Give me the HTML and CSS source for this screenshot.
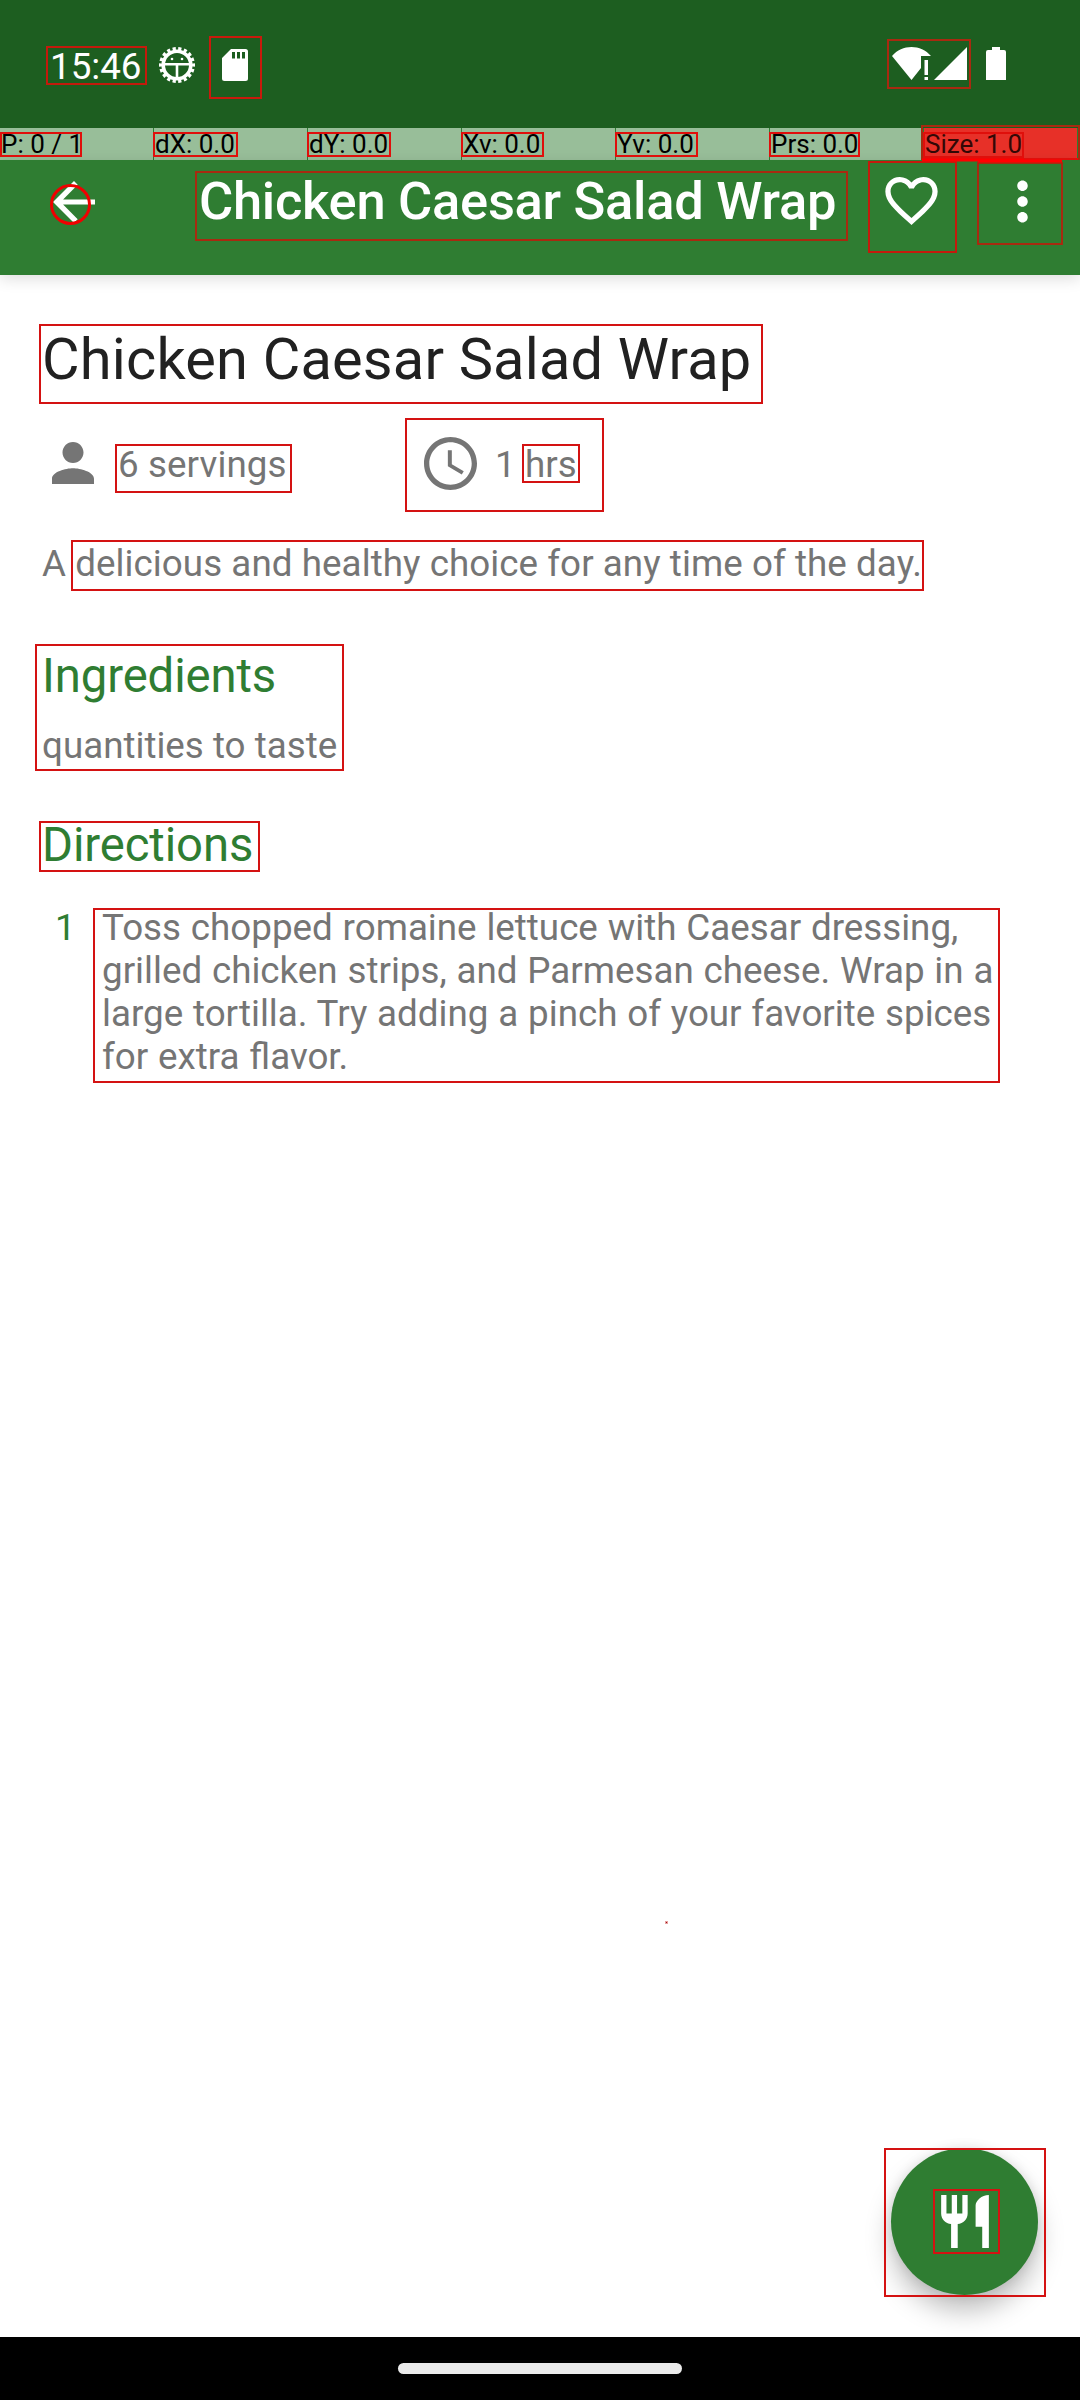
FILE: index.html
```html
<!DOCTYPE html>
<html lang="en">
<head>
<meta charset="utf-8">
<title>Chicken Caesar Salad Wrap</title>
<link rel="stylesheet" href="styles.css">
</head>
<body>
<div class="screen">
  <header class="status">
    <span class="clock">15:46</span>
    <svg class="gear" viewBox="0 0 38 38">
      <circle cx="19" cy="19" r="16" fill="none" stroke="#fff" stroke-width="4" pathLength="108" stroke-dasharray="3.400 2.600" stroke-dashoffset="1.700"/>
      <circle cx="19" cy="19" r="13.800" fill="none" stroke="#fff" stroke-width="3.600"/>
      <path d="M6 18.200h26M19 19v13" stroke="#fff" stroke-width="2.600" fill="none"/>
      <circle cx="14" cy="13" r="1.300" fill="#fff"/><circle cx="24" cy="13" r="1.300" fill="#fff"/>
    </svg>
    <svg class="sd" viewBox="0 0 26 32"><path fill="#fff" fill-rule="evenodd" d="M9 0h14.500a2.500 2.500 0 0 1 2.500 2.500v27a2.500 2.500 0 0 1-2.500 2.500h-21a2.500 2.500 0 0 1-2.500-2.500V9zM10 3v6.500h3V3zM15 3v6.500h3V3zM20 3v6.500h3V3z"/></svg>
    <span class="spacer"></span>
    <svg class="signals" viewBox="0 0 76 34">
      <path fill="#fff" d="M0 9C10-3 29-3 39 9H29v12l-9.500 12z"/>
      <path fill="#fff" d="M32.500 13h3.500v15h-3.500zM32.500 30h3.500v3h-3.500zM75 0v33H42z"/>
    </svg>
    <svg class="battery" viewBox="0 0 20 33"><path fill="#fff" d="M6 0h8v3h4a2 2 0 0 1 2 2v28H0V5a2 2 0 0 1 2-2h4z"/></svg>
  </header>

  <div class="pointer">
    <span>P: 0 / 1</span><span>dX: 0.0</span><span>dY: 0.0</span><span>Xv: 0.0</span><span>Yv: 0.0</span><span>Prs: 0.0</span><span class="size">Size: 1.0</span>
  </div>

  <div class="toolbar">
    <svg class="back" viewBox="0 0 42 42"><path fill="#fff" d="M42 18.400H10.100L24.700 3.700 21 0 0 21l21 21 3.700-3.700L10.100 23.600H42z"/></svg>
    <h1>Chicken Caesar Salad Wrap</h1>
    <svg class="heart" viewBox="2 3 20 18.350"><path fill="#fff" d="M16.500 3c-1.740 0-3.410.810-4.500 2.090C10.910 3.810 9.240 3 7.500 3 4.420 3 2 5.420 2 8.500c0 3.780 3.400 6.860 8.550 11.540L12 21.350l1.450-1.320C18.600 15.360 22 12.280 22 8.500 22 5.420 19.580 3 16.500 3zm-4.400 15.550l-.1.100-.1-.1C7.140 14.240 4 11.390 4 8.500 4 6.500 5.500 5 7.500 5c1.540 0 3.040.990 3.570 2.360h1.870C13.460 5.990 14.960 5 16.500 5c2 0 3.500 1.500 3.500 3.500 0 2.890-3.140 5.740-7.900 10.050z"/></svg>
    <svg class="more" viewBox="8 0 8 24"><path fill="#fff" d="M12 8c1.100 0 2-.9 2-2s-.9-2-2-2-2 .9-2 2 .9 2 2 2zm0 2c-1.100 0-2 .9-2 2s.9 2 2 2 2-.9 2-2-.9-2-2-2zm0 6c-1.100 0-2 .9-2 2s.9 2 2 2 2-.9 2-2-.9-2-2-2z"/></svg>
  </div>

  <main class="content">
    <h2 class="name">Chicken Caesar Salad Wrap</h2>
    <div class="facts">
      <div class="fact">
        <svg class="person" viewBox="4 4 16 16"><path fill="#757575" d="M12 12c2.210 0 4-1.790 4-4s-1.790-4-4-4-4 1.790-4 4 1.790 4 4 4zm0 2c-2.670 0-8 1.340-8 4v2h16v-2c0-2.660-5.330-4-8-4z"/></svg>
        <span>6 servings</span>
      </div>
      <div class="fact">
        <svg class="time" viewBox="2 2 20 20"><path fill="#757575" d="M11.990 2C6.470 2 2 6.480 2 12s4.470 10 9.990 10C17.520 22 22 17.520 22 12S17.520 2 11.990 2zM12 20c-4.420 0-8-3.580-8-8s3.580-8 8-8 8 3.580 8 8-3.580 8-8 8zM12.500 7H11v6l5.250 3.150.750-1.230-4.500-2.670z"/></svg>
        <span>1 hrs</span>
      </div>
    </div>
    <p class="summary">A delicious and healthy choice for any time of the day.</p>
    <h3 class="ingredients">Ingredients</h3>
    <p class="quantities">quantities to taste</p>
    <h3 class="directions">Directions</h3>
    <div class="step">
      <span class="num">1</span>
      <p>Toss chopped romaine lettuce with Caesar dressing,<br>grilled chicken strips, and Parmesan cheese. Wrap in a<br>large tortilla. Try adding a pinch of your favorite spices<br>for extra flavor.</p>
    </div>
    <div class="fab">
      <svg viewBox="3 2 18 20"><path fill="#fff" d="M11 9H9V2H7v7H5V2H3v7c0 2.120 1.660 3.840 3.750 3.970V22h2.500v-9.030C11.340 12.840 13 11.120 13 9V2h-2v7zm5-3v8h2.500v8H21V2c-2.760 0-5 2.240-5 4z"/></svg>
    </div>
  </main>
  <footer class="nav"><span class="handle"></span></footer>

  <svg class="marks" viewBox="0 0 1080 2400">
    <g fill="none" stroke-width="2">
      <g stroke="#a82a10">
        <rect x="47" y="47" width="99" height="37" stroke="#c41a0c"/>
        <rect x="210" y="37" width="51" height="61" stroke="#c81a0c"/>
        <rect x="888" y="40" width="82" height="48"/>
        <rect x="196" y="172" width="651" height="68"/>
        <rect x="869" y="162" width="87" height="90" stroke="#c41a0c"/>
        <rect x="978" y="163" width="84" height="81"/>
      </g>
      <g stroke="#e00f0b">
        <rect x="1" y="133" width="80" height="23"/>
        <rect x="154" y="133" width="83" height="23"/>
        <rect x="308" y="133" width="82" height="23"/>
        <rect x="462" y="133" width="81" height="23"/>
        <rect x="616" y="133" width="81" height="23"/>
        <rect x="770" y="133" width="89" height="23"/>
        <rect x="924" y="133" width="99" height="24"/>
        <path d="M922 159h157"/>
        <path d="M922 160V126h157v34" stroke="#a82a10"/>
        <path d="M922 160h102M978 161h84" stroke="#f00" stroke-width="3"/>
      </g>
      <g stroke="#d41212">
        <rect x="40" y="325" width="722" height="78"/>
        <rect x="116" y="445" width="175" height="47"/>
        <rect x="406" y="419" width="197" height="92"/>
        <rect x="523" y="445" width="56" height="37"/>
        <rect x="72" y="541" width="851" height="49"/>
        <rect x="36" y="645" width="307" height="125"/>
        <rect x="40" y="822" width="219" height="49"/>
        <rect x="94" y="909" width="905" height="173"/>
        <rect x="885" y="2149" width="160" height="147"/>
        <rect x="934" y="2190" width="65" height="63"/>
      </g>
      <circle cx="70.500" cy="204.500" r="19" stroke="#f00000" stroke-width="3"/>
    </g>
    <rect x="665" y="1921" width="3" height="3" fill="#e8a0a0"/>
    <rect x="666" y="1922" width="1" height="1" fill="#901010"/>
  </svg>
</div>
</body>
</html>
```
FILE: styles.css
```css
* { box-sizing: border-box; margin: 0; padding: 0; }
body { font-family: Roboto, sans-serif; background: #fff; }
svg { display: block; flex: none; }
.screen { position: relative; width: 1080px; height: 2400px; display: flex; flex-direction: column; overflow: hidden; }

.status { height: 128px; background: #1d5e20; display: flex; align-items: flex-start; padding: 0 74px 0 50px; color: #fff; }
.clock { font-size: 36.750px; line-height: 44px; margin-top: 45px; width: 108px; }
.gear { width: 38px; height: 38px; margin-top: 46px; }
.sd { width: 26px; height: 32px; margin: 49px 0 0 26px; }
.spacer { flex: 1; }
.signals { width: 76px; height: 34px; margin: 47px 18px 0 0; }
.battery { width: 20px; height: 33px; margin-top: 47px; }

.pointer { height: 32px; display: grid; grid-template-columns: repeat(7, 153px); column-gap: 1px; background: #2f7d32; }
.pointer span { background: #98be99; color: #000; font-size: 26px; line-height: 32px; padding-left: 1px; white-space: nowrap; }
.pointer .size { background: #e73028; color: #330806; }

.toolbar { height: 115px; background: #2f7d32; display: flex; align-items: flex-start; color: #fff; position: relative; z-index: 1; box-shadow: 0 4px 14px rgba(0,0,0,.13); }
.back { width: 42px; height: 42px; margin: 21px 0 0 53px; }
.toolbar h1 { font-size: 52.500px; font-weight: 500; line-height: 62px; letter-spacing: -.3px; margin: 10px 0 0 104px; width: 686px; white-space: nowrap; }
.heart { width: 53px; height: 48px; margin-top: 17px; }
.more { width: 21px; height: 63px; margin: 10px 0 0 74px; }

.content { flex: 1; padding-left: 42px; color: #757575; font-size: 36.750px; letter-spacing: .1px; position: relative; overflow: hidden; }
.name { font-size: 57.750px; font-weight: 400; line-height: 68px; letter-spacing: .18px; color: #212121; margin-top: 50px; white-space: nowrap; }
.facts { display: grid; grid-template-columns: 373px auto; margin-top: 37px; height: 66px; }
.fact { display: flex; align-items: center; }
.person { width: 42px; height: 42px; margin-left: 10px; }
.fact span { margin-left: 24px; line-height: 44px; padding-top: 3px; }
.time { width: 53px; height: 53px; margin-left: 9px; }
.fact .time + span { margin-left: 18px; }
.summary { line-height: 43px; margin-top: 46px; letter-spacing: .06px; white-space: nowrap; }
h3 { font-size: 47.250px; font-weight: 400; line-height: 56px; letter-spacing: -.1px; color: #2f7d32; }
.ingredients { margin-top: 63px; }
.quantities { line-height: 43px; margin-top: 20px; letter-spacing: 0; }
.directions { margin-top: 50px; }
.step { display: flex; margin-top: 33px; line-height: 43px; }
.num { color: #2f7d32; width: 60px; padding-left: 13px; }
.step p { white-space: nowrap; font-variant-ligatures: common-ligatures; letter-spacing: 0; word-spacing: .7px; }
.fab { position: absolute; left: 891px; top: 1873px; width: 147px; height: 147px; border-radius: 50%; background: #2f7d32; display: flex; align-items: center; justify-content: center; box-shadow: 0 16px 26px rgba(0,0,0,.25), 0 0 12px rgba(0,0,0,.1); }
.fab svg { width: 48px; height: 53px; }

.nav { height: 63px; background: #000; display: flex; justify-content: center; padding-top: 26px; }
.handle { width: 284px; height: 11px; border-radius: 6px; background: #ebebeb; }
.marks { position: absolute; inset: 0; width: 1080px; height: 2400px; z-index: 2; pointer-events: none; }
```
